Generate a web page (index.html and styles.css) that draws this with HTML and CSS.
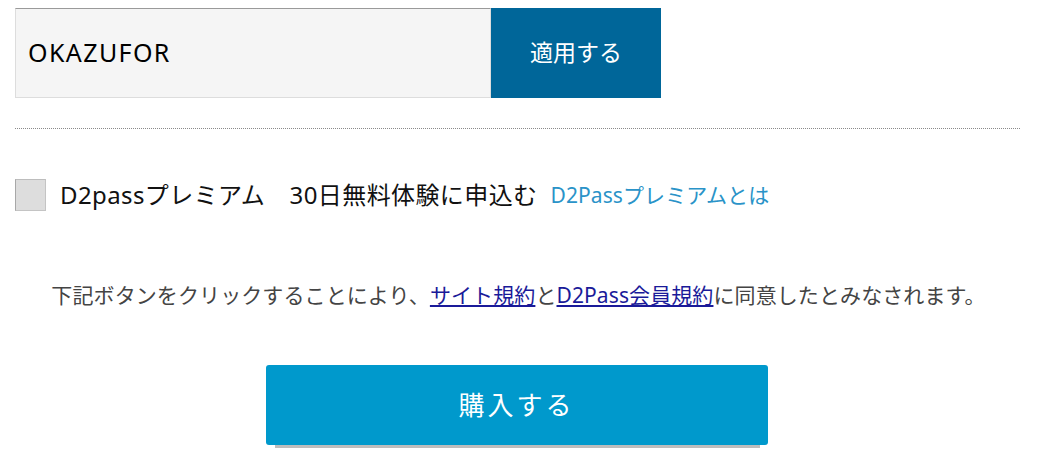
FILE: index.html
```html
<!DOCTYPE html>
<html lang="ja">
<head>
<meta charset="utf-8">
<link rel="stylesheet" href="styles.css">
</head>
<body>
<div class="page">
  <div class="coupon">
    <div class="coupon-input">OKAZUFOR</div>
    <button class="apply">適用する</button>
  </div>
  <hr class="divider">
  <div class="premium">
    <span class="checkbox"></span>
    <span class="premium-label">D2passプレミアム　30日無料体験に申込む</span>
    <a class="premium-link" href="#">D2Passプレミアムとは</a>
  </div>
  <p class="agree">下記ボタンをクリックすることにより、<a href="#">サイト規約</a>と<a href="#">D2Pass会員規約</a>に同意したとみなされます。</p>
  <div class="buy-wrap">
    <div class="buy-shadow"></div>
    <button class="buy">購入する</button>
  </div>
</div>
</body>
</html>
```

FILE: styles.css
```css
html, body {
  margin: 0;
  padding: 0;
  background: #fff;
}
body {
  font-family: "Noto Sans", "Noto Sans CJK JP", sans-serif;
}
.page {
  width: 1005px;
  margin-left: 15px;
  padding-top: 8px;
}
.coupon {
  display: flex;
  height: 90px;
}
.coupon-input {
  box-sizing: border-box;
  width: 476px;
  height: 90px;
  background: #f5f5f5;
  border: 1px solid #dddddd;
  border-top-color: #9a9a9a;
  padding-left: 12px;
  padding-bottom: 2px;
  display: flex;
  align-items: center;
  font-size: 25px;
  letter-spacing: 1.4px;
  color: #000;
}
.apply {
  width: 170px;
  height: 90px;
  border: 0;
  margin: 0;
  padding: 0 0 5px;
  background: #006699;
  color: #fff;
  font-family: "Noto Sans CJK JP", sans-serif;
  font-size: 23px;
}
.divider {
  margin: 30px 0 0;
  border: 0;
  border-top: 1px dotted #8a8a8a;
  height: 0;
}
.premium {
  display: flex;
  align-items: center;
  margin-top: 50px;
  height: 32px;
}
.checkbox {
  box-sizing: border-box;
  width: 31px;
  height: 32px;
  background: #dddddd;
  border: 1px solid #c4c4c4;
  border-left-color: #a8a8a8;
  border-top-color: #bdbdbd;
  margin-right: 14px;
}
.premium-label {
  font-size: 24px;
  letter-spacing: 0.4px;
  color: #111;
  white-space: nowrap;
  line-height: 32px;
}
.premium-link {
  margin-left: 13px;
  font-size: 21px;
  letter-spacing: 0.1px;
  color: #2a93c8;
  text-decoration: none;
  white-space: nowrap;
  line-height: 32px;
}
.agree {
  margin: 68px 0 0;
  text-align: center;
  font-size: 21px;
  letter-spacing: 0.1px;
  line-height: 32px;
  color: #444;
  padding-left: 2px;
  white-space: nowrap;
}
.agree a {
  color: #1a1a99;
  text-decoration: underline;
}
.buy-wrap {
  position: relative;
  display: flex;
  justify-content: center;
  margin-top: 54px;
  padding-right: 2px;
  height: 84px;
}
.buy-shadow {
  position: absolute;
  left: 260px;
  top: 8px;
  width: 485px;
  height: 75px;
  background: #bdbdbd;
}
.buy {
  position: relative;
  width: 502px;
  height: 80px;
  border: 0;
  margin: 0;
  padding: 0 0 4px;
  border-radius: 3px;
  background: #0099cc;
  color: #fff;
  font-family: "Noto Sans CJK JP", sans-serif;
  font-size: 26px;
  letter-spacing: 3px;
}
```
